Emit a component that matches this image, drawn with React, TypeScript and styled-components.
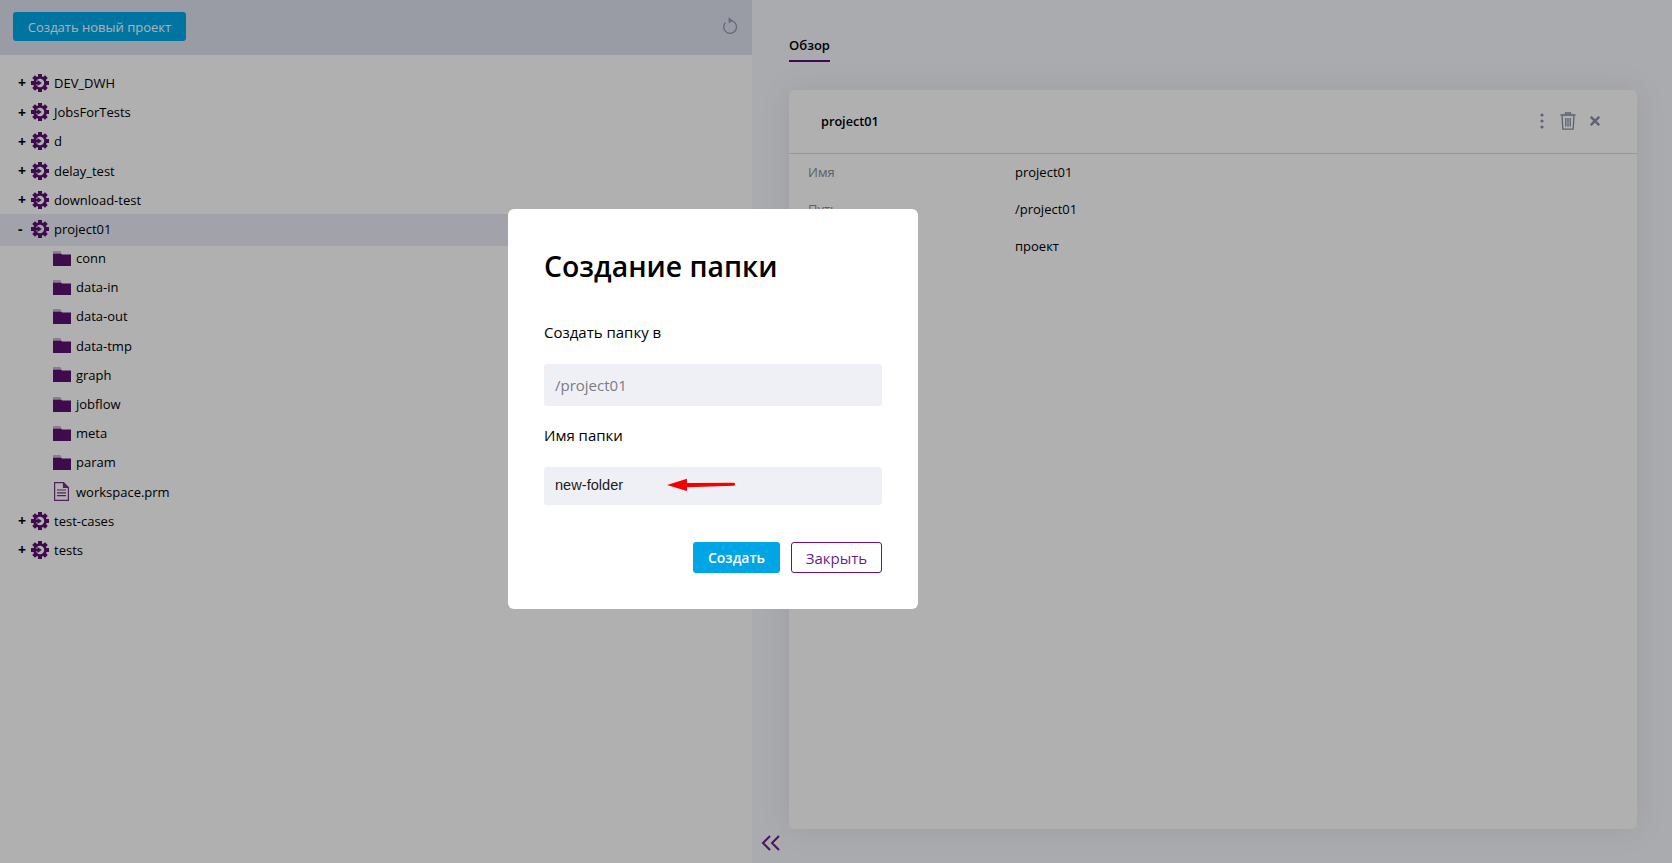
import React from 'react';
import styled, { createGlobalStyle } from 'styled-components';

const GlobalStyle = createGlobalStyle`
  html, body {
    margin: 0;
    padding: 0;
    height: 100%;
    overflow: hidden;
    font-family: "Open Sans", "Liberation Sans", sans-serif;
  }
`;

const Page = styled.div`
  display: flex;
  width: 1672px;
  height: 863px;
  overflow: hidden;
  background: #fff;
`;

const LeftPanel = styled.div`
  width: 752px;
  flex: none;
  background: #fff;
`;

const LeftHeader = styled.div`
  height: 55px;
  display: flex;
  align-items: flex-start;
  justify-content: space-between;
  padding: 12px 14px 0 13px;
  box-sizing: border-box;
  background: #dfe2f0;
`;

const NewProjectButton = styled.button`
  height: 29px;
  width: 173px;
  padding: 0;
  border: 0;
  border-radius: 3px;
  background: #00a9e8;
  color: #fff;
  font: 13px "Open Sans", sans-serif;
`;

const RefreshButton = styled.span`
  display: flex;
  margin: 5px 0 0;
  color: #9a9bb5;
`;

const Tree = styled.div`
  padding-top: 13.4px;
`;

const Row = styled.div<{ $selected?: boolean; $child?: boolean }>`
  height: 29.2px;
  display: flex;
  align-items: center;
  padding-left: ${(p) => (p.$child ? '53px' : '18px')};
  background: ${(p) => (p.$selected ? '#ebedf6' : 'transparent')};
  box-shadow: ${(p) => (p.$selected ? '0 2px 0 #ebedf6' : 'none')};
  color: #000;
  font-size: 13px;
`;

const Toggle = styled.span`
  width: 13px;
  flex: none;
  font-size: 14px;
  font-weight: 700;
`;

const RowIcon = styled.span`
  width: 23px;
  flex: none;
  display: flex;
  color: #5a1170;
`;

const RightPanel = styled.div`
  flex: 1;
  padding: 0 35px 34px 37px;
  box-sizing: border-box;
  display: flex;
  flex-direction: column;
  background: #f7f8fd;
  position: relative;
`;

const Tabs = styled.div`
  height: 90px;
  flex: none;
  padding-top: 33px;
  box-sizing: border-box;
`;

const Tab = styled.span`
  display: inline-block;
  height: 26px;
  box-sizing: border-box;
  border-bottom: 2px solid #5a0f78;
  font-size: 13px;
  font-weight: 600;
  color: #000;
  line-height: 18px;
`;

const Card = styled.div`
  flex: 1;
  background: #fff;
  border-radius: 5px;
  box-shadow: 0 0 30px rgba(60, 60, 80, 0.1);
`;

const CardHeader = styled.div`
  height: 64px;
  display: flex;
  align-items: center;
  justify-content: space-between;
  padding: 0 37px 2px 32px;
  border-bottom: 1px solid #d9d9d9;
  box-sizing: border-box;
`;

const CardTitle = styled.span`
  font-size: 12.7px;
  font-weight: 600;
  color: #000;
`;

const CardActions = styled.div`
  display: flex;
  align-items: center;
  gap: 14px;
  color: #8a8da8;

  svg:first-child {
    margin-right: 2px;
  }
`;

const PropRow = styled.div`
  display: flex;
  align-items: center;
  height: 37px;
  padding: 0 0 2px 19px;
  box-sizing: border-box;
  font-size: 13px;
  color: #000;
`;

const PropList = styled.div`
  padding-top: 0;
`;

const PropName = styled.span`
  width: 207px;
  color: #8b8b94;
`;

const Overlay = styled.div`
  position: fixed;
  inset: 0;
  background: rgba(0, 0, 0, 0.31);
  padding: 209px 0 0 508px;
  box-sizing: border-box;
`;

const Modal = styled.div`
  width: 410px;
  height: 400px;
  padding: 38px 36px 0;
  box-sizing: border-box;
  background: #fff;
  border-radius: 6px;
  display: flex;
  flex-direction: column;
`;

const ModalTitle = styled.h2`
  margin: 0;
  font-size: 28.4px;
  line-height: 38px;
  font-weight: 600;
  color: #000;
`;

const FieldLabel = styled.div<{ $top: number }>`
  margin-top: ${(p) => p.$top}px;
  height: 22px;
  font-size: 15px;
  line-height: 22px;
  color: #000;
`;

const Field = styled.div<{ $disabled?: boolean; $height: number; $top: number }>`
  position: relative;
  height: ${(p) => p.$height}px;
  margin-top: ${(p) => p.$top}px;
  padding: 0 0 ${(p) => (p.$disabled ? '0' : '2px')} 11px;
  box-sizing: border-box;
  display: flex;
  align-items: center;
  background: #eff0f5;
  border-radius: 3px;
  font-family: ${(p) => (p.$disabled ? '"Open Sans"' : '"Liberation Sans"')}, sans-serif;
  font-size: ${(p) => (p.$disabled ? '15px' : '14.6px')};
  color: ${(p) => (p.$disabled ? '#7c7a86' : '#1c1c1c')};
`;

const ArrowMark = styled.svg`
  position: absolute;
  left: 123px;
  top: 11px;
`;

const ModalFooter = styled.div`
  display: flex;
  justify-content: flex-end;
  gap: 11px;
  margin-top: 37px;
`;

const PrimaryButton = styled.button`
  width: 87px;
  height: 31px;
  padding: 0;
  border: 0;
  border-radius: 3px;
  background: #00a5e6;
  color: #fff;
  font: 600 14px "Open Sans", sans-serif;
`;

const SecondaryButton = styled.button`
  width: 91px;
  height: 31px;
  padding: 0;
  border: 1px solid #6a0f86;
  border-radius: 3px;
  background: #fff;
  color: #6a1f8a;
  font: 15px "Open Sans", sans-serif;
`;

const CollapseButton = styled.span`
  position: absolute;
  left: 9px;
  bottom: 12px;
  display: flex;
  color: #6a1f8a;
`;

const GearIcon = () => {
  const teeth = [0, 45, 90, 135, 180, 225, 270, 315];
  return (
    <svg width="18" height="18" viewBox="0 0 18 18">
      {teeth.map((a) => (
        <rect key={a} x="7" y="0" width="4" height="4" fill="currentColor" transform={`rotate(${a} 9 9)`} />
      ))}
      <circle cx="9" cy="9" r="5.5" fill="none" stroke="currentColor" strokeWidth="2.6" />
      <rect x="0" y="7.6" width="7" height="2.8" fill="currentColor" />
      <path d="M6.5 6 L10.8 9 L6.5 12 Z" fill="currentColor" />
    </svg>
  );
};

const FolderIcon = () => (
  <svg width="18" height="15" viewBox="0 0 18 15">
    <path d="M0 0.5 H7.5 L8.5 1.5 H0 Z" fill="currentColor" opacity="0.6" />
    <path d="M0 2.5 H8 L9 3.5 H18 V15 H0 Z" fill="currentColor" />
  </svg>
);

const FileIcon = () => (
  <svg width="17" height="19" viewBox="0 0 17 19" fill="none" stroke="currentColor" strokeWidth="1.2" opacity="0.85">
    <path d="M1.6 0.6 H10.5 L15.4 5.5 V18.4 H1.6 Z" />
    <path d="M10.5 0.6 V5.5 H15.4" fill="currentColor" />
    <path d="M4 8 H13 M4 10.8 H13 M4 13.6 H13" />
  </svg>
);

const RefreshIcon = () => (
  <svg width="16" height="17" viewBox="0 0 16 17" fill="none">
    <path d="M8.7 3.6 A6.4 6.4 0 1 1 3.4 5.6" stroke="currentColor" strokeWidth="1.4" />
    <path d="M6.4 0.2 L11 3.4 L6.8 6.4 Z" fill="currentColor" />
  </svg>
);

const DotsIcon = () => (
  <svg width="4" height="16" viewBox="0 0 4 16" fill="currentColor">
    <circle cx="2" cy="2" r="1.6" />
    <circle cx="2" cy="8" r="1.6" />
    <circle cx="2" cy="14" r="1.6" />
  </svg>
);

const TrashIcon = () => (
  <svg width="16" height="18" viewBox="0 0 16 18" fill="none" stroke="currentColor" strokeWidth="1.3">
    <path d="M0.5 3 H15.5" strokeWidth="1.6" />
    <path d="M5.5 2.6 V1 H10.5 V2.6" />
    <path d="M2 3.2 L2.8 17.2 H13.2 L14 3.2" />
    <path d="M5.8 6 V14.5 M8 6 V14.5 M10.2 6 V14.5" />
  </svg>
);

const CloseIcon = () => (
  <svg width="10" height="10" viewBox="0 0 10 10" stroke="currentColor" strokeWidth="2.4">
    <path d="M0.8 0.8 L9.2 9.2 M9.2 0.8 L0.8 9.2" />
  </svg>
);

const ChevronsIcon = () => (
  <svg width="19" height="16" viewBox="0 0 19 16" fill="none" stroke="currentColor" strokeWidth="2">
    <path d="M9 1 L2 8 L9 15" />
    <path d="M18 1 L11 8 L18 15" />
  </svg>
);

const topBefore = ['DEV_DWH', 'JobsForTests', 'd', 'delay_test', 'download-test'];
const folders = ['conn', 'data-in', 'data-out', 'data-tmp', 'graph', 'jobflow', 'meta', 'param'];
const topAfter = ['test-cases', 'tests'];

const ProjectRow: React.FC<{ name: string; open?: boolean }> = ({ name, open }) => (
  <Row $selected={open}>
    <Toggle>{open ? '-' : '+'}</Toggle>
    <RowIcon>
      <GearIcon />
    </RowIcon>
    {name}
  </Row>
);

const App: React.FC = () => {
  return (
    <>
      <GlobalStyle />
      <Page>
        <LeftPanel>
          <LeftHeader>
            <NewProjectButton>Создать новый проект</NewProjectButton>
            <RefreshButton>
              <RefreshIcon />
            </RefreshButton>
          </LeftHeader>
          <Tree>
            {topBefore.map((name) => (
              <ProjectRow key={name} name={name} />
            ))}
            <ProjectRow name="project01" open />
            {folders.map((name) => (
              <Row key={name} $child>
                <RowIcon>
                  <FolderIcon />
                </RowIcon>
                {name}
              </Row>
            ))}
            <Row $child>
              <RowIcon>
                <FileIcon />
              </RowIcon>
              workspace.prm
            </Row>
            {topAfter.map((name) => (
              <ProjectRow key={name} name={name} />
            ))}
          </Tree>
        </LeftPanel>
        <RightPanel>
          <Tabs>
            <Tab>Обзор</Tab>
          </Tabs>
          <Card>
            <CardHeader>
              <CardTitle>project01</CardTitle>
              <CardActions>
                <DotsIcon />
                <TrashIcon />
                <CloseIcon />
              </CardActions>
            </CardHeader>
            <PropList>
              <PropRow>
                <PropName>Имя</PropName>
                project01
              </PropRow>
              <PropRow>
                <PropName>Путь</PropName>
                /project01
              </PropRow>
              <PropRow>
                <PropName>Тип</PropName>
                проект
              </PropRow>
            </PropList>
          </Card>
          <CollapseButton>
            <ChevronsIcon />
          </CollapseButton>
        </RightPanel>
      </Page>
      <Overlay>
        <Modal>
          <ModalTitle>Создание папки</ModalTitle>
          <FieldLabel $top={36}>Создать папку в</FieldLabel>
          <Field $disabled $height={42} $top={21}>
            /project01
          </Field>
          <FieldLabel $top={18}>Имя папки</FieldLabel>
          <Field $height={38} $top={21}>
            new-folder
            <ArrowMark width="70" height="14" viewBox="0 0 70 14">
              <path d="M0 7 L20 0.8 L20 5 L67 4.8 Q69.5 6 67 7.8 L20 9.2 L20 13 Z" fill="#f50000" />
            </ArrowMark>
          </Field>
          <ModalFooter>
            <PrimaryButton>Создать</PrimaryButton>
            <SecondaryButton>Закрыть</SecondaryButton>
          </ModalFooter>
        </Modal>
      </Overlay>
    </>
  );
};

export default App;
